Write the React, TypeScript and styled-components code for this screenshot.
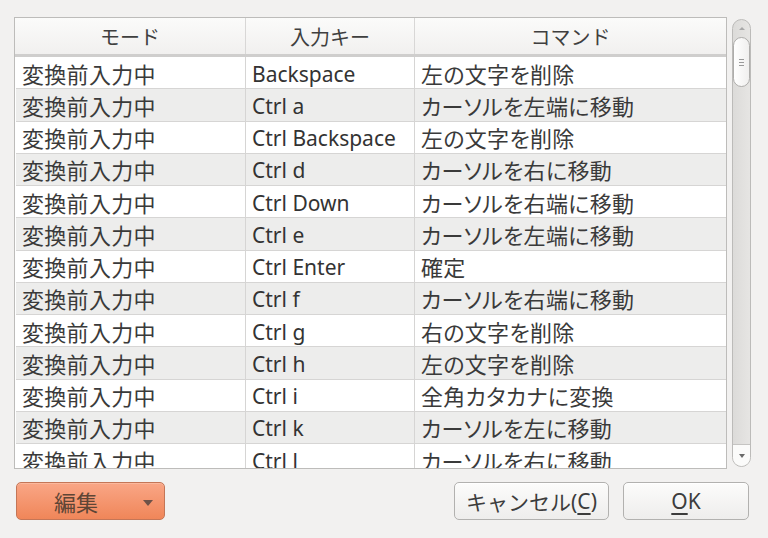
import React from 'react';
import styled, { createGlobalStyle } from 'styled-components';

const GlobalStyle = createGlobalStyle`
  html, body {
    margin: 0;
    padding: 0;
    background: #f2f1f0;
  }
  body {
    font-family: "Noto Sans", "Noto Sans CJK JP", sans-serif;
    color: #3c3c3c;
  }
`;

interface Binding {
  mode: string;
  key: string;
  command: string;
}

const rows: Binding[] = [
  { mode: '変換前入力中', key: 'Backspace', command: '左の文字を削除' },
  { mode: '変換前入力中', key: 'Ctrl a', command: 'カーソルを左端に移動' },
  { mode: '変換前入力中', key: 'Ctrl Backspace', command: '左の文字を削除' },
  { mode: '変換前入力中', key: 'Ctrl d', command: 'カーソルを右に移動' },
  { mode: '変換前入力中', key: 'Ctrl Down', command: 'カーソルを右端に移動' },
  { mode: '変換前入力中', key: 'Ctrl e', command: 'カーソルを左端に移動' },
  { mode: '変換前入力中', key: 'Ctrl Enter', command: '確定' },
  { mode: '変換前入力中', key: 'Ctrl f', command: 'カーソルを右端に移動' },
  { mode: '変換前入力中', key: 'Ctrl g', command: '右の文字を削除' },
  { mode: '変換前入力中', key: 'Ctrl h', command: '左の文字を削除' },
  { mode: '変換前入力中', key: 'Ctrl i', command: '全角カタカナに変換' },
  { mode: '変換前入力中', key: 'Ctrl k', command: 'カーソルを左に移動' },
  { mode: '変換前入力中', key: 'Ctrl l', command: 'カーソルを右に移動' },
];

const Page = styled.div`
  width: 768px;
  height: 538px;
  box-sizing: border-box;
  padding: 17px 16px 0 14px;
  display: flex;
  flex-direction: column;
`;

const ListArea = styled.div`
  display: flex;
  gap: 5px;
  height: 452px;
`;

const Table = styled.div`
  width: 713px;
  box-sizing: border-box;
  border: 1px solid #bdbcba;
  background: #ffffff;
  overflow: hidden;
`;

const HeaderRow = styled.div`
  display: grid;
  grid-template-columns: 231px 169px 1fr;
  height: 36px;
  background: linear-gradient(#fbfbfa, #f1f0ef);
  border-bottom: 3px solid #cfcecd;
`;

const HeaderCell = styled.div`
  display: flex;
  align-items: center;
  justify-content: center;
  font-size: 20px;
  color: #3f3f3f;
  border-right: 1px solid #d8d7d6;
  &:last-child {
    border-right: none;
  }
`;

const Body = styled.div`
  display: grid;
  grid-auto-rows: 32.25px;
  margin-left: 1px;
`;

const Row = styled.div<{ $odd: boolean }>`
  display: grid;
  grid-template-columns: 230px 169px 1fr;
  background: ${(p) => (p.$odd ? '#ededec' : '#ffffff')};
  border-bottom: 1px solid #d6d5d4;
  box-sizing: border-box;
`;

const Cell = styled.div`
  display: flex;
  align-items: center;
  padding-left: 6px;
  padding-top: 2px;
  font-size: 21px;
  color: #333333;
  white-space: nowrap;
  overflow: hidden;
  border-right: 1px solid #d6d5d4;
  &:last-child {
    border-right: none;
  }
`;

const CjkCell = styled(Cell)<{ $prop?: boolean }>`
  padding-top: 0;
  font-size: 22px;
  letter-spacing: 0.3px;
  color: #3a3a3a;
  ${(p) => (p.$prop ? 'font-feature-settings: "palt";' : '')}
`;

const Scrollbar = styled.div`
  width: 19px;
  margin-top: 2px;
  height: 448px;
  box-sizing: border-box;
  border: 1px solid #bcbbb9;
  border-radius: 10px;
  background: linear-gradient(90deg, #dcdbd9, #e6e5e3);
  display: flex;
  flex-direction: column;
  align-items: center;
`;

const Arrow = styled.div<{ $down?: boolean }>`
  width: 0;
  height: 0;
  border-left: 3px solid transparent;
  border-right: 3px solid transparent;
  ${(p) =>
    p.$down
      ? 'border-top: 4px solid #6a6a6a;'
      : 'border-bottom: 3px solid #a8a8a8;'}
`;

const UpEnd = styled.div`
  height: 17px;
  display: flex;
  align-items: center;
  justify-content: center;
`;

const Thumb = styled.div`
  width: 17px;
  height: 50px;
  box-sizing: border-box;
  border: 1px solid #aeadab;
  border-radius: 9px;
  background: linear-gradient(90deg, #ffffff, #f0efee);
  display: flex;
  flex-direction: column;
  align-items: center;
  justify-content: center;
  gap: 2px;
`;

const Grip = styled.div`
  width: 5px;
  height: 1px;
  background: #9a9a9a;
`;

const Spacer = styled.div`
  flex: 1;
`;

const DownEnd = styled.div`
  width: 17px;
  height: 22px;
  box-sizing: border-box;
  border-top: 1px solid #c5c4c2;
  border-radius: 0 0 9px 9px;
  background: #fbfbfa;
  display: flex;
  align-items: center;
  justify-content: center;
`;

const ButtonBar = styled.div`
  display: flex;
  align-items: center;
  margin-top: 13px;
  padding-left: 2px;
  padding-right: 3px;
`;

const Button = styled.button<{ $w: number }>`
  width: ${(p) => p.$w}px;
  height: 38px;
  box-sizing: border-box;
  border: 1px solid #b2b1af;
  border-radius: 5px;
  background: linear-gradient(#fcfcfb, #eeedec);
  font-family: "Noto Sans", "Noto Sans CJK JP", sans-serif;
  font-size: 21px;
  color: #3c3c3c;
  padding: 0;
  display: flex;
  align-items: center;
  justify-content: center;
  box-shadow: inset 0 1px 0 #ffffff;
  u {
    text-underline-offset: 4px;
  }
`;

const EditButton = styled(Button)`
  border-color: #c47657;
  background: linear-gradient(#f9a686, #f08659);
  color: #5e4535;
  box-shadow: inset 0 1px 0 #fbb89d;
  justify-content: flex-start;
  padding-left: 37px;
  font-size: 22px;
  position: relative;
`;

const DropArrow = styled.span`
  position: absolute;
  right: 11px;
  top: 17px;
  width: 0;
  height: 0;
  border-left: 5px solid transparent;
  border-right: 5px solid transparent;
  border-top: 6px solid #6e5248;
`;

const Grow = styled.div`
  flex: 1;
`;

const Gap = styled.div`
  width: 14px;
`;

export default function App() {
  return (
    <>
      <GlobalStyle />
      <Page>
        <ListArea>
          <Table>
            <HeaderRow>
              <HeaderCell>モード</HeaderCell>
              <HeaderCell>入力キー</HeaderCell>
              <HeaderCell>コマンド</HeaderCell>
            </HeaderRow>
            <Body>
              {rows.map((r, i) => (
                <Row key={i} $odd={i % 2 === 1}>
                  <CjkCell>{r.mode}</CjkCell>
                  <Cell>{r.key}</Cell>
                  <CjkCell $prop>{r.command}</CjkCell>
                </Row>
              ))}
            </Body>
          </Table>
          <Scrollbar>
            <UpEnd>
              <Arrow />
            </UpEnd>
            <Thumb>
              <Grip />
              <Grip />
              <Grip />
            </Thumb>
            <Spacer />
            <DownEnd>
              <Arrow $down />
            </DownEnd>
          </Scrollbar>
        </ListArea>
        <ButtonBar>
          <EditButton $w={149}>
            編集
            <DropArrow />
          </EditButton>
          <Grow />
          <Button $w={155}>
            キャンセル(<u>C</u>)
          </Button>
          <Gap />
          <Button $w={126}>
            <u>O</u>K
          </Button>
        </ButtonBar>
      </Page>
    </>
  );
}
